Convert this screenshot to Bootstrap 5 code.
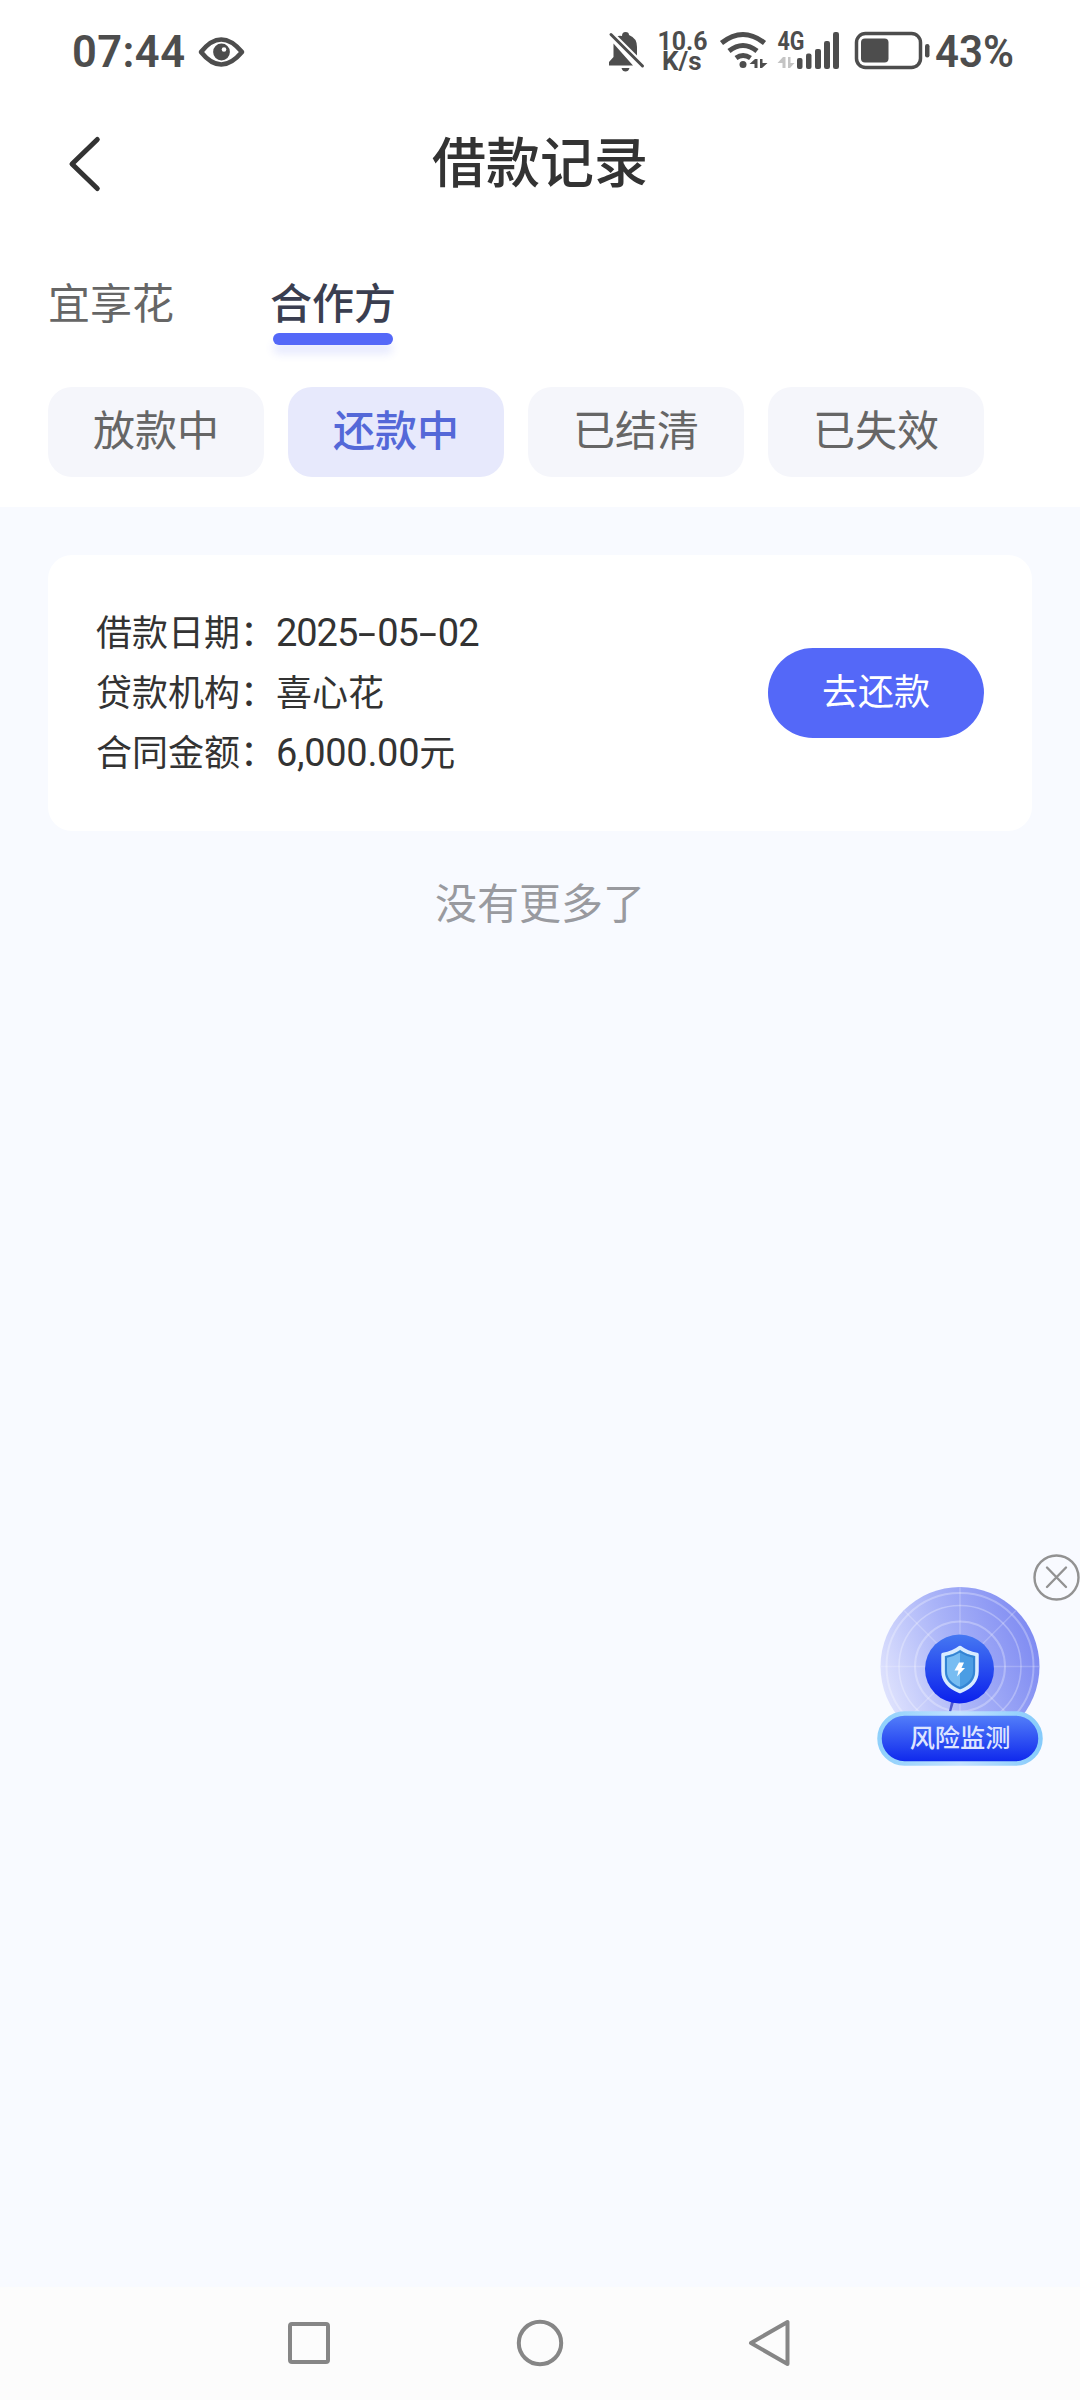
<!DOCTYPE html>
<html lang="zh-CN">
<head>
<meta charset="utf-8">
<meta name="viewport" content="width=device-width, initial-scale=1">
<title>借款记录</title>
<link href="https://cdn.jsdelivr.net/npm/bootstrap@5.3.0/dist/css/bootstrap.min.css" rel="stylesheet">
<style>
body{font-family:Roboto,"Noto Sans CJK SC",sans-serif;background:#f8faff;color:#333;width:1080px;min-height:2400px}
svg{display:block;flex:none}
svg text{font-family:Roboto,"Noto Sans CJK SC",sans-serif}
.page-head{height:507px}
.statusbar{height:102px;padding:0 56px 0 72px}
.titlebar{height:120px;padding:3px 68px 0}
.titlebar h1{font:500 54px/1 "Noto Sans CJK SC",sans-serif;color:#333;padding-bottom:7px}
.side-slot{width:34px}
.tabline{height:165px;padding:55px 48px 0;gap:96px}
.tab-item{font:400 42px/48px "Noto Sans CJK SC",sans-serif;color:#666;text-decoration:none}
.tab-item.active{font-weight:500;color:#3a3e50}
.tab-item.active::after{content:"";display:block;width:120px;height:12px;border-radius:6px;background:#5468f8;margin:8px auto 0;box-shadow:0 9px 9px rgba(84,104,248,.14)}
.filters{padding:0 48px;gap:24px}
.filters .btn{width:216px;height:90px;border:0;border-radius:24px;background:#f5f6fb;color:#666;font:400 42px/1 "Noto Sans CJK SC",sans-serif;padding:0 0 9px}
.filters .btn.active{background:#e7e9fc;color:#5468d8;font-weight:500}
.loan-card{margin:48px 48px 0;height:276px;border:0;border-radius:24px;padding:0 48px}
.loan-list{font:400 36px/60px "Noto Sans CJK SC",sans-serif;color:#333;padding-bottom:6px}
.loan-list dt{font-weight:400;width:180px}
.loan-list dd{margin:0}
.figures{font-family:Roboto,sans-serif;font-size:38px;line-height:1;letter-spacing:-1.05px}
.sum-figures{letter-spacing:-.3px}
.dash{display:inline-block;width:20px;text-align:center;transform:scaleX(1.7);letter-spacing:0}
.pay-btn{width:216px;height:90px;border:0;background:#5468f8;color:#fff;font:400 36px/1 "Noto Sans CJK SC",sans-serif;padding:0 0 8px}
.list-end{font:400 42px/60px "Noto Sans CJK SC",sans-serif;color:#999a9f;margin-top:40px}
.risk-float{right:0;top:1550px}
.navkeys{height:113px;background:#fcfcfc;padding:0 288px 2px}
</style>
</head>
<body class="d-flex flex-column position-relative">
<header class="page-head bg-white">
  <div class="statusbar d-flex align-items-center">
    <svg width="176" height="102" viewBox="72 0 176 102" fill="#4d4d4d">
      <text x="72" y="66.500" font-size="43.500" font-weight="600" textLength="113" lengthAdjust="spacing">07:44</text>
      <path d="M201 52Q221 27 242 52Q221 77 201 52Z" fill="none" stroke="#4d4d4d" stroke-width="4.600" stroke-linejoin="round"/>
      <circle cx="221.500" cy="52" r="8.400"/><circle cx="224" cy="49.500" r="2.300" fill="#fff"/>
    </svg>
    <svg class="ms-auto" width="420" height="102" viewBox="604 0 420 102" fill="#4d4d4d">
      <path d="M622 36Q622 32 625.500 32Q629 32 629 35Q637 38 637 47V59L638 61L616 36.500Q619 35.500 622 36ZM613.500 43.500L633 65.500H609V62L613.500 57ZM621.500 68H629.500Q628.500 71.500 625.500 71.500T621.500 68Z"/>
      <path d="M611 34.500L642.500 66" stroke="#fff" stroke-width="7"/>
      <path d="M611 34.500L642.500 66" stroke="#4d4d4d" stroke-width="3" stroke-linecap="round"/>
      <text x="657.500" y="50" font-size="25.500" font-weight="700" textLength="50" lengthAdjust="spacingAndGlyphs">10.6</text>
      <text x="662" y="70" font-size="25" font-weight="700" textLength="39.500" lengthAdjust="spacingAndGlyphs">K/s</text>
      <g fill="none" stroke="#4d4d4d" stroke-width="5">
        <path d="M721.500 43Q743 26 764.500 43"/><path d="M729 51Q743 40 757 51"/><path d="M736 58Q743 53 750.500 58"/>
      </g>
      <circle cx="743" cy="64.500" r="3.500"/>
      <path d="M755 59H757.500V68H754.500V64H749.500ZM760 59H762.500V63H767.500L762 68H760Z"/>
      <text x="777.500" y="50" font-size="25" font-weight="700" textLength="27" lengthAdjust="spacingAndGlyphs">4G</text>
      <path d="M783 57H785.500V68H782.500V63H777.500ZM788 57H790.500V63H794.500L790 68H788Z" fill="#c4c4c4"/>
      <rect x="797" y="58" width="5.500" height="11" rx="2"/><rect x="806" y="53.500" width="5.500" height="15.500" rx="2"/><rect x="815" y="49" width="6" height="20" rx="2"/><rect x="824" y="41" width="6" height="28" rx="2.200"/><rect x="833" y="32" width="6" height="37" rx="2.200"/>
      <rect x="856.500" y="33.500" width="64" height="34" rx="9" fill="none" stroke="#4d4d4d" stroke-width="3.500"/>
      <rect x="861" y="38.500" width="27.500" height="24" rx="4"/><rect x="925" y="44" width="4.500" height="13.500" rx="2.200"/>
      <text x="935" y="66.500" font-size="43.500" font-weight="600" textLength="79" lengthAdjust="spacingAndGlyphs">43%</text>
    </svg>
  </div>
  <div class="titlebar d-flex align-items-center justify-content-between">
    <svg width="34" height="60" viewBox="68 135 34 60" fill="none" stroke="#333" stroke-width="5" stroke-linecap="round" stroke-linejoin="round"><path d="M97.300 140.500L72 165L97.300 189.500"/></svg>
    <h1 class="m-0">借款记录</h1>
    <span class="side-slot"></span>
  </div>
  <nav class="tabline d-flex">
    <a class="tab-item">宜享花</a>
    <a class="tab-item active">合作方</a>
  </nav>
  <div class="filters d-flex">
    <button class="btn">放款中</button>
    <button class="btn active">还款中</button>
    <button class="btn">已结清</button>
    <button class="btn">已失效</button>
  </div>
</header>
<main class="flex-grow-1">
  <section class="card loan-card bg-white flex-row align-items-center justify-content-between">
    <dl class="loan-list m-0">
      <div class="d-flex"><dt>借款日期：</dt><dd><span class="figures">2025<span class="dash">-</span>05<span class="dash">-</span>02</span></dd></div>
      <div class="d-flex"><dt>贷款机构：</dt><dd>喜心花</dd></div>
      <div class="d-flex"><dt>合同金额：</dt><dd><span class="figures sum-figures">6,000.00</span>元</dd></div>
    </dl>
    <button class="btn rounded-pill pay-btn">去还款</button>
  </section>
  <p class="list-end text-center mb-0">没有更多了</p>
</main>
<aside class="risk-float position-absolute">
  <svg width="210" height="220" viewBox="870 1550 210 220">
    <defs>
      <linearGradient id="dish" x1="0" y1=".75" x2="1" y2=".4"><stop offset="0" stop-color="#e4e7fe"/><stop offset=".5" stop-color="#aab4f8"/><stop offset="1" stop-color="#7f8bf2"/></linearGradient>
      <linearGradient id="core" x1="0" y1="0" x2="0" y2="1"><stop offset="0" stop-color="#4678f2"/><stop offset="1" stop-color="#0a20ec"/></linearGradient>
      <linearGradient id="pill" x1="0" y1="0" x2="0" y2="1"><stop offset="0" stop-color="#5682fa"/><stop offset="1" stop-color="#0c25ec"/></linearGradient>
      <linearGradient id="rim" x1="0" y1="0" x2="1" y2="0"><stop offset="0" stop-color="#8fd0fb"/><stop offset=".5" stop-color="#c3e2ff"/><stop offset="1" stop-color="#86cbfb"/></linearGradient>
      <linearGradient id="guard" x1="0" y1="0" x2="1" y2="0"><stop offset=".5" stop-color="#78bdf2"/><stop offset=".5" stop-color="#4b9de4"/></linearGradient>
      <clipPath id="above"><rect x="870" y="1580" width="180" height="140"/></clipPath>
    </defs>
    <g clip-path="url(#above)">
      <circle cx="960" cy="1666.500" r="79.500" fill="url(#dish)"/>
      <g fill="none" stroke="#fff" stroke-opacity=".28" stroke-width="1.600">
        <circle cx="960" cy="1666.500" r="73.500" stroke-width="2"/><circle cx="960" cy="1666.500" r="61"/><circle cx="960" cy="1666.500" r="45" stroke-width="2"/>
        <path d="M960 1587V1740M881 1666.500H1039M904 1610.500L1016 1722.500M1016 1610.500L904 1722.500" stroke-opacity=".2"/>
      </g>
      <path d="M949 1711L951 1702H954L951 1712Z" fill="#4b55ce"/>
    </g>
    <circle cx="959.500" cy="1669" r="34.500" fill="url(#core)"/>
    <path d="M960 1647.500Q967 1653 977 1654.500V1671Q977 1685 960 1691.500Q943 1685 943 1671V1654.500Q953 1653 960 1647.500Z" fill="url(#guard)" stroke="#d9ecff" stroke-width="3.500" stroke-linejoin="round"/>
    <path d="M960 1651.500Q967 1656 974 1657V1671Q974 1682.500 960 1688Q946 1682.500 946 1671V1657Q953 1656 960 1651.500Z" fill="none" stroke="#3484d3" stroke-width="2"/>
    <path d="M959 1662.500H964L961.500 1668H965L957 1676.500L958.500 1670.500H954.500Z" fill="#fff"/>
    <rect x="879.500" y="1713.500" width="161" height="50" rx="25" fill="url(#pill)" stroke="url(#rim)" stroke-width="4.500"/>
    <text x="960" y="1746.500" text-anchor="middle" font-size="25.200" font-weight="500" fill="#dde4ff">风险监测</text>
    <g fill="none" stroke="#929292" stroke-width="2.400"><circle cx="1056.500" cy="1577.500" r="22"/><path d="M1047 1567.500L1066 1587M1066 1567.500L1047 1587" stroke-linecap="round"/></g>
  </svg>
</aside>
<footer class="navkeys d-flex align-items-center justify-content-between">
  <svg width="44" height="50" viewBox="0 0 44 50" fill="none" stroke="#868686" stroke-width="4"><rect x="2" y="6" width="38" height="38" rx="2"/></svg>
  <svg width="50" height="50" viewBox="0 0 50 50" fill="none" stroke="#868686" stroke-width="4"><circle cx="25" cy="25" r="21.200"/></svg>
  <svg width="44" height="50" viewBox="0 0 44 50" fill="none" stroke="#868686" stroke-width="4" stroke-linejoin="round"><path d="M39.500 4V46L3 25Z"/></svg>
</footer>
<script src="https://cdn.jsdelivr.net/npm/bootstrap@5.3.0/dist/js/bootstrap.bundle.min.js"></script>
</body>
</html>
